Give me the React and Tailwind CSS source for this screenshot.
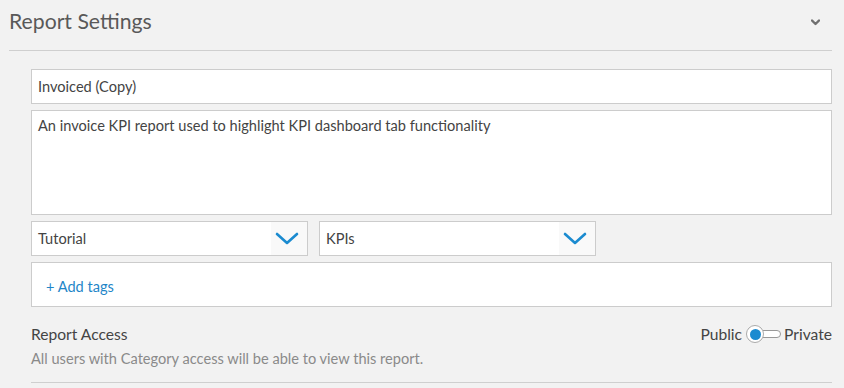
export default function App() {
  const Chevron = () => (
    <svg width="24" height="14" viewBox="0 0 24 14" fill="none">
      <path d="M2 2 L12 11 L22 2" stroke="#1b8bd0" strokeWidth="2.6" strokeLinecap="round" strokeLinejoin="round" />
    </svg>
  );
  return (
    <div className="w-[844px] h-[388px] bg-[#f2f2f2] overflow-hidden text-[#555]" style={{ fontFamily: 'Lato, "Open Sans", sans-serif' }}>
      <div className="pl-[9px] pr-[12px]">
        <div className="h-[51px] flex items-center justify-between border-b border-[#cfcfcf]">
          <div className="text-[21.2px] text-[#595959] leading-none -mt-[6px]">Report Settings</div>
          <svg className="mr-[12px] -mt-[6px]" width="9" height="7" viewBox="0 0 9 7">
            <path d="M1 1.5 L4.5 5 L8 1.5" stroke="#707070" strokeWidth="2.4" fill="none" strokeLinecap="round" strokeLinejoin="round" />
          </svg>
        </div>
      </div>
      <div className="pl-[31px] pr-[12px] pt-[18px] flex flex-col">
        <div className="h-[35px] bg-white border border-[#cccccc] flex items-center px-[6px] text-[14.6px] text-[#444]">Invoiced (Copy)</div>
        <div className="mt-[6px] h-[105px] bg-white border border-[#cccccc] px-[6px] pt-[4px] text-[14.6px] text-[#444]">
          An invoice KPI report used to highlight KPI dashboard tab functionality
        </div>
        <div className="mt-[6px] flex gap-[11px]">
          {["Tutorial", "KPIs"].map((t) => (
            <div key={t} className="w-[277px] h-[35px] bg-white border border-[#cccccc] flex items-center justify-between text-[14.6px] text-[#444]">
              <span className="pl-[6px]">{t}</span>
              <span className="w-[36px] h-full flex items-center justify-center bg-[#f9f9f9] pr-[4px]"><Chevron /></span>
            </div>
          ))}
        </div>
        <div className="mt-[6px] h-[45px] bg-white border border-[#cccccc] flex items-center pl-[14px] pt-[4px] text-[14.6px] text-[#1f86c8]">+ Add tags</div>
        <div className="mt-[17px] flex justify-between items-start">
          <div>
            <div className="text-[15.6px] text-[#444] leading-[20px]">Report Access</div>
            <div className="mt-[6px] text-[14.6px] text-[#8a8a8a] leading-[18px]">All users with Category access will be able to view this report.</div>
          </div>
          <div className="flex items-center text-[15.6px] text-[#444] leading-[20px]">
            <span>Public</span>
            <span className="relative ml-[4px] w-[36px] h-[18px] flex items-center">
              <span className="absolute left-[8px] top-[5px] w-[27px] h-[8px] rounded-full bg-white border border-[#999]" />
              <span className="absolute left-0 top-0 w-[18px] h-[18px] rounded-full bg-white border border-[#aaa] flex items-center justify-center">
                <span className="w-[11px] h-[11px] rounded-full bg-[#1b8bd0]" />
              </span>
            </span>
            <span className="ml-[2px]">Private</span>
          </div>
        </div>
        <div className="mt-[14px] border-b border-[#cfcfcf]" />
      </div>
    </div>
  );
}
